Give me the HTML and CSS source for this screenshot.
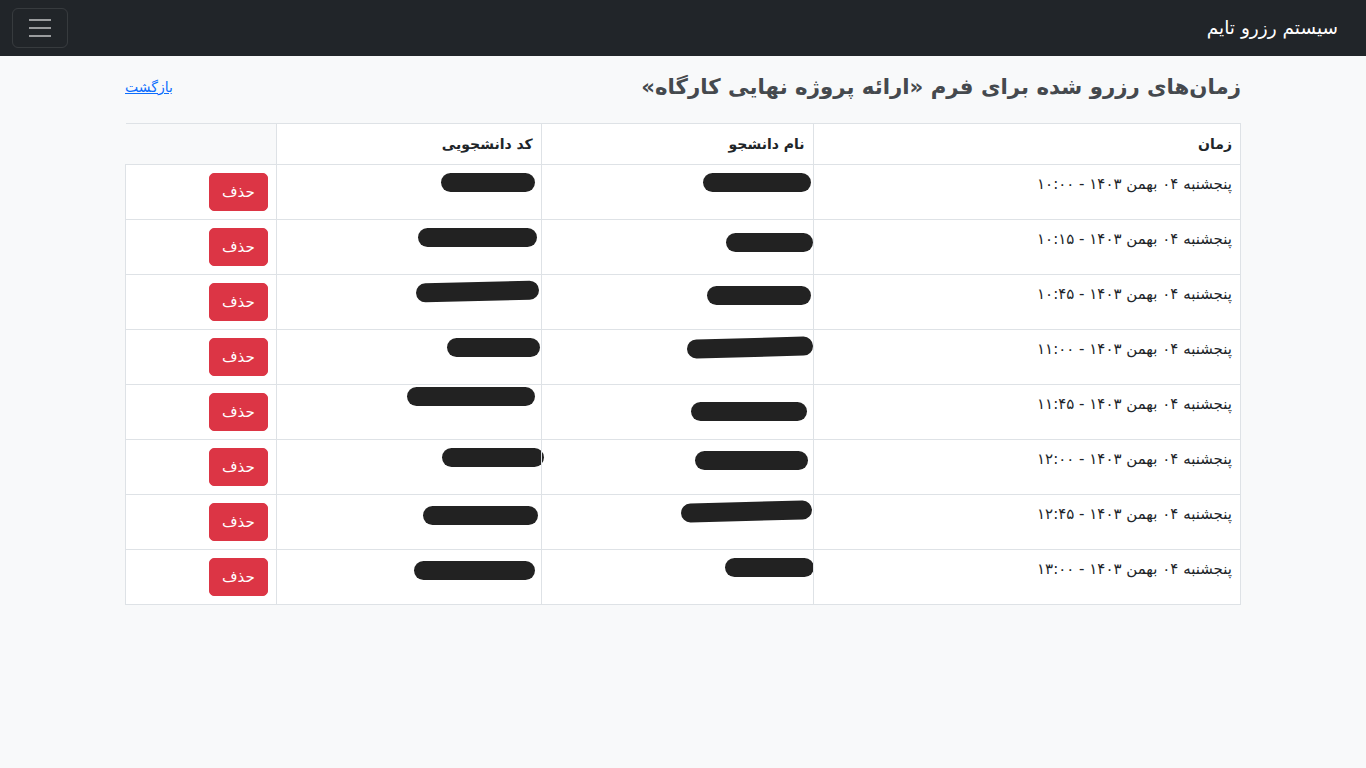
FILE: index.html
```html
<!DOCTYPE html>
<html lang="fa" dir="rtl">
<head>
<meta charset="utf-8">
<title>سیستم رزرو تایم</title>
<link rel="stylesheet" href="styles.css">
</head>
<body>
<nav class="navbar">
  <a class="brand" href="#">سیستم رزرو تایم</a>
  <button class="toggler" type="button" aria-label="menu">
    <svg width="30" height="30" viewBox="0 0 30 30"><path d="M4 7h22M4 15h22M4 23h22" stroke="rgba(255,255,255,0.55)" stroke-width="2"/></svg>
  </button>
</nav>
<main class="container">
  <div class="title-row">
    <h1 class="title">زمان‌های رزرو شده برای فرم «ارائه پروژه نهایی کارگاه»</h1>
    <a class="back" href="#">بازگشت</a>
  </div>
  <table class="table">
    <thead>
      <tr><th class="c-time">زمان</th><th class="c-name">نام دانشجو</th><th class="c-code">کد دانشجویی</th><th class="c-act"></th></tr>
    </thead>
    <tbody>
      <tr><td>پنجشنبه ۰۴ بهمن ۱۴۰۳ - ۱۰:۰۰</td><td><span class="blob" style="width:108px;margin-right:-6px;margin-top:0px"></span></td><td><span class="blob" style="width:94px;margin-right:-2px;margin-top:0px"></span></td><td><button class="btn-del">حذف</button></td></tr>
      <tr><td>پنجشنبه ۰۴ بهمن ۱۴۰۳ - ۱۰:۱۵</td><td><span class="blob" style="width:87px;margin-right:-8px;margin-top:5px"></span></td><td><span class="blob" style="width:119px;margin-right:-4px;margin-top:0px"></span></td><td><button class="btn-del">حذف</button></td></tr>
      <tr><td>پنجشنبه ۰۴ بهمن ۱۴۰۳ - ۱۰:۴۵</td><td><span class="blob" style="width:104px;margin-right:-6px;margin-top:3px"></span></td><td><span class="blob tilt" style="width:123px;margin-right:-6px;margin-top:-1px"></span></td><td><button class="btn-del">حذف</button></td></tr>
      <tr><td>پنجشنبه ۰۴ بهمن ۱۴۰۳ - ۱۱:۰۰</td><td><span class="blob tilt" style="width:126px;margin-right:-8px;margin-top:0px"></span></td><td><span class="blob" style="width:93px;margin-right:-7px;margin-top:0px"></span></td><td><button class="btn-del">حذف</button></td></tr>
      <tr><td>پنجشنبه ۰۴ بهمن ۱۴۰۳ - ۱۱:۴۵</td><td><span class="blob" style="width:116px;margin-right:-2px;margin-top:9px"></span></td><td><span class="blob" style="width:128px;margin-right:-2px;margin-top:-6px"></span></td><td><button class="btn-del">حذف</button></td></tr>
      <tr><td>پنجشنبه ۰۴ بهمن ۱۴۰۳ - ۱۲:۰۰</td><td><span class="blob" style="width:113px;margin-right:-3px;margin-top:3px"></span></td><td><span class="blob" style="width:102px;margin-right:-11px;margin-top:0px"></span></td><td><button class="btn-del">حذف</button></td></tr>
      <tr><td>پنجشنبه ۰۴ بهمن ۱۴۰۳ - ۱۲:۴۵</td><td><span class="blob tilt" style="width:131px;margin-right:-7px;margin-top:-1px"></span></td><td><span class="blob" style="width:115px;margin-right:-5px;margin-top:3px"></span></td><td><button class="btn-del">حذف</button></td></tr>
      <tr><td>پنجشنبه ۰۴ بهمن ۱۴۰۳ - ۱۳:۰۰</td><td><span class="blob" style="width:89px;margin-right:-9px;margin-top:0px"></span></td><td><span class="blob" style="width:121px;margin-right:-2px;margin-top:3px"></span></td><td><button class="btn-del">حذف</button></td></tr>
    </tbody>
  </table>
</main>
</body>
</html>
```
FILE: styles.css
```css
* { box-sizing: border-box; }
html, body { margin: 0; padding: 0; }
body {
  background: #f8f9fa;
  color: #212529;
  font-family: "DejaVu Sans", "Noto Sans", sans-serif;
  font-size: 15px;
  line-height: 1.5;
}
.navbar {
  height: 56px;
  background: #212529;
  display: flex;
  align-items: center;
  justify-content: space-between;
  padding: 0 28px 0 12px;
}
.brand {
  color: #fff;
  text-decoration: none;
  font-size: 18.5px;
}
.toggler {
  width: 56px;
  height: 40px;
  background: transparent;
  border: 1px solid rgba(255,255,255,0.1);
  border-radius: 6px;
  display: flex;
  align-items: center;
  justify-content: center;
  padding: 0;
}
.container {
  width: 1116px;
  margin: 0 auto;
}
.title-row {
  display: flex;
  justify-content: space-between;
  align-items: flex-start;
  height: 67px;
  padding-top: 0;
}
.title {
  margin: 0;
  margin-top: 15px;
  font-size: 21.3px;
  font-weight: bold;
  color: #45494e;
  line-height: 32px;
}
.back {
  color: #0d6efd;
  font-size: 14px;
  text-decoration: underline;
  margin-top: 21px;
}
.table {
  width: 100%;
  border-collapse: collapse;
}
.table th, .table td {
  border: 1px solid #dee2e6;
  padding: 8px;
  text-align: right;
  vertical-align: top;
  background: #fff;
}
.table th {
  font-weight: bold;
  font-size: 14px;
  line-height: 24px;
}
.table th.c-act {
  background: transparent;
  border-left: none;
}
.c-time { width: 428px; }
.c-name { width: 272px; }
.c-code { width: 265px; }
.c-act { width: 151px; }
.table td { height: 55px; }
.blob {
  display: block;
  height: 19px;
  background: #222;
  border-radius: 10px;
}
.blob.tilt { transform: rotate(-1.5deg); }
.btn-del {
  background: #dc3545;
  color: #fff;
  border: 1px solid #dc3545;
  border-radius: 5px;
  font-family: inherit;
  font-size: 15px;
  line-height: 24px;
  padding: 6px 12px;
  width: 59px;
  height: 38px;
  cursor: pointer;
}
```
